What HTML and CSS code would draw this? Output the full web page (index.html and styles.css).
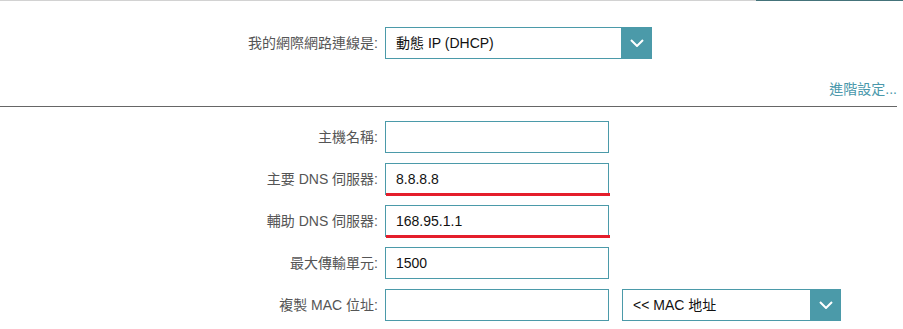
FILE: index.html
```html
<!DOCTYPE html>
<html lang="zh-Hant">
<head>
<meta charset="utf-8">
<title>網際網路設定</title>
<link rel="stylesheet" href="styles.css">
</head>
<body>
<div class="tabline"><span class="tab-rest"></span><span class="tab-active"></span></div>

<div class="conn-row">
  <label class="lbl">我的網際網路連線是:</label>
  <div class="select select-wide">
    <span class="select-text">動態 IP (DHCP)</span>
    <span class="select-btn"><svg width="14" height="8" viewBox="0 0 14 8"><polyline points="1,1 7,7 13,1" fill="none" stroke="#fff" stroke-width="2"/></svg></span>
  </div>
</div>

<div class="adv"><a class="adv-link" href="#">進階設定...</a></div>
<div class="divider"></div>

<div class="form">
  <label class="lbl">主機名稱:</label>
  <div class="field"><input class="inp" type="text" value=""></div>
  <span></span>

  <label class="lbl">主要 DNS 伺服器:</label>
  <div class="field"><input class="inp" type="text" value="8.8.8.8"><span class="mark"></span></div>
  <span></span>

  <label class="lbl">輔助 DNS 伺服器:</label>
  <div class="field"><input class="inp" type="text" value="168.95.1.1"><span class="mark"></span></div>
  <span></span>

  <label class="lbl">最大傳輸單元:</label>
  <div class="field"><input class="inp" type="text" value="1500"></div>
  <span></span>

  <label class="lbl">複製 MAC 位址:</label>
  <div class="field"><input class="inp" type="text" value=""></div>
  <div class="select select-mac">
    <span class="select-text">&lt;&lt; MAC 地址</span>
    <span class="select-btn"><svg width="14" height="8" viewBox="0 0 14 8"><polyline points="1,1 7,7 13,1" fill="none" stroke="#fff" stroke-width="2"/></svg></span>
  </div>
</div>
</body>
</html>
```

FILE: styles.css
```css
* { box-sizing: border-box; }
html, body { margin: 0; padding: 0; background: #fff; }
body {
  font-family: "Liberation Sans", "Noto Sans CJK TC", Arial, sans-serif;
  font-size: 14px;
  line-height: 16px;
  color: #222;
  width: 903px;
  height: 329px;
  overflow: hidden;
}

.tabline { display: flex; height: 1px; }
.tab-rest { width: 756px; background: #d2d2d2; }
.tab-active { flex: 1; background: #44737a; }

.conn-row {
  display: grid;
  grid-template-columns: 378px 267px;
  column-gap: 7px;
  align-items: center;
  margin-top: 26px;
  height: 32px;
}

.lbl {
  text-align: right;
  color: #555;
  white-space: nowrap;
}

.select {
  display: flex;
  height: 32px;
  border: 1px solid #4b9aa9;
  background: #fff;
}
.select-text {
  flex: 1;
  display: flex;
  align-items: center;
  padding-left: 10px;
  color: #111;
}
.select-btn {
  width: 31px;
  margin: -1px -1px -1px 0;
  background: #4b9aa9;
  display: flex;
  align-items: center;
  justify-content: center;
}
.select-mac { width: 219px; margin-left: 6px; }
.select-mac .select-btn { width: 31px; }

.adv {
  display: flex;
  justify-content: flex-end;
  padding-right: 6px;
  margin-top: 22px;
}
.adv-link { color: #4a98ab; text-decoration: none; }

.divider {
  width: 897px;
  height: 1px;
  background: #666;
  margin-top: 9px;
}

.form {
  display: grid;
  grid-template-columns: 378px 224px auto;
  grid-auto-rows: 32px;
  column-gap: 7px;
  row-gap: 10px;
  align-items: center;
  margin-top: 14px;
}

.field { position: relative; height: 32px; }
.inp {
  display: block;
  width: 224px;
  height: 32px;
  margin: 0;
  border: 1px solid #4b9aa9;
  border-radius: 0;
  padding: 0 10px;
  font: inherit;
  color: #111;
  background: #fff;
  outline: none;
}
.mark {
  position: absolute;
  left: 1px;
  right: -1px;
  top: 30px;
  height: 3px;
  background: #e41e2b;
}
```
